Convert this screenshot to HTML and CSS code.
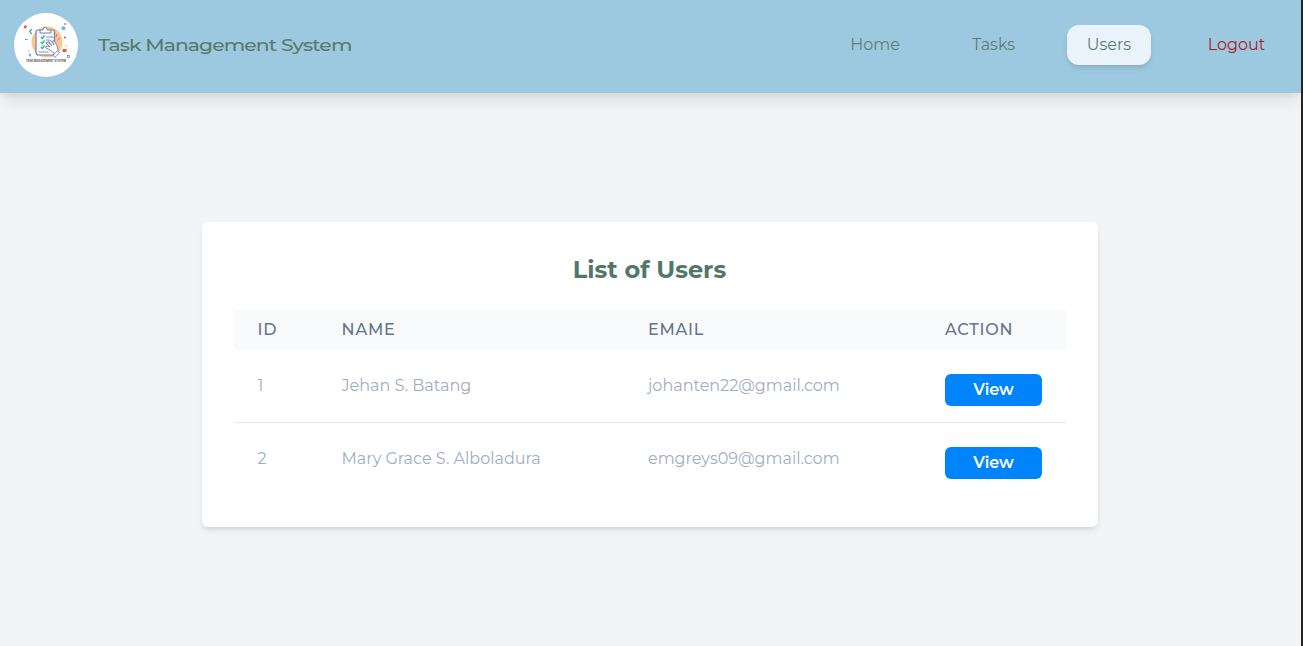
FILE: index.html
```html
<!DOCTYPE html>
<html lang="en">
<head>
<meta charset="utf-8">
<title>Task Management System</title>
<link rel="stylesheet" href="styles.css">
</head>
<body>
<div class="page">
  <header class="navbar">
    <div class="brand">
      <svg class="logo" viewBox="0 0 64 64" aria-hidden="true">
        <circle cx="32" cy="32" r="32" fill="#fff"/>
        <circle cx="33" cy="29" r="15.500" fill="#ffc58e"/>
        <path d="M26 17H23.500Q22 17 22 18.500V39.500Q22 42 24.500 42H38.500Q40.500 42 40.500 39.500V18.500Q40.500 17 39 17H36" fill="#f4f8ff" stroke="#7680ae" stroke-width="1.200"/>
        <path d="M26 20V17H29Q29.500 14 31 14T33.500 17H37V20Z" fill="#fff" stroke="#7680ae"/>
        <path d="M27 24l1.300 1.500 2.200-3M27 29l1.300 1.500 2.200-3M27 34l1.300 1.500 2.200-3" fill="none" stroke="#35b878" stroke-width="1.300"/>
        <path d="M32 24h6M32 27h3M24.500 39h10" stroke="#7680ae" stroke-width=".8"/>
        <path d="M40 40L36 37 31.500 34.500Q31 33 34 33L36 34 32 30Q32 28.500 34 29.500L38 33 34.500 28Q35 26.500 37 28L40 32 38.500 28Q40 26.500 41 29L43.500 34Q45 38 42.500 40" fill="#fff" stroke="#7680ae" stroke-width=".9"/>
        <path d="M39 42l4.500-4 2 1.500-4.500 5zM39.500 25l-2-2M42 24l1-3M43.500 27l2.500-2" fill="#fff" stroke="#7680ae" stroke-width=".9"/>
        <path d="M18 16l-2.500 2.500L18 21" fill="none" stroke="#3dbd83" stroke-width="1.300"/>
        <circle cx="11.300" cy="13.800" r="1.600" fill="#f05a32"/>
        <circle cx="49.500" cy="15.300" r="2" fill="#5ebce5"/>
        <circle cx="51" cy="11" r="1" fill="#e96d55"/>
        <rect x="48.500" y="36" width="4" height="3" fill="#f05a32"/>
        <path d="M17 40v4l-3-2z" fill="#58b9e6"/>
        <path d="M11 26.500h3" stroke="#7880ae" stroke-width=".8"/>
        <circle cx="51" cy="24.500" r="1" fill="#6470a5"/>
        <circle cx="14.500" cy="38" r=".7" fill="#ef9067"/>
        <circle cx="52" cy="33" r=".7" fill="#efaa67"/>
        <rect x="53.500" y="42.500" width="2" height="2" fill="none" stroke="#6470a5" stroke-width=".7"/>
        <circle cx="15.500" cy="59" r=".6" fill="#6bbd9a"/>
        <text x="12" y="49" textLength="40" lengthAdjust="spacingAndGlyphs" class="logo-text">TASK MANAGEMENT SYSTEM</text>
      </svg>
      <span class="brand-name">Task Management System</span>
    </div>
    <nav class="links">
      <a class="link home">Home</a>
      <a class="link tasks">Tasks</a>
      <a class="link users">Users</a>
      <a class="link logout">Logout</a>
    </nav>
  </header>
  <main class="content">
    <section class="card">
      <h1 class="title">List of Users</h1>
      <div class="row head"><span>ID</span><span>NAME</span><span>EMAIL</span><span>ACTION</span></div>
      <div class="row item"><span>1</span><span>Jehan S. Batang</span><span>johanten22@gmail.com</span><a class="view">View</a></div>
      <div class="row item"><span>2</span><span>Mary Grace S. Alboladura</span><span>emgreys09@gmail.com</span><a class="view">View</a></div>
    </section>
  </main>
</div>
</body>
</html>
```
FILE: styles.css
```css
* { box-sizing: border-box; }
body { margin: 0; background: #242424; font: 16px/24px Montserrat, Inter, sans-serif; }
.page { width: calc(100% - 2px); height: 646px; overflow: hidden; background: #f3f4f6; display: flex; flex-direction: column; }
.navbar { height: 93px; flex: none; padding: 0 16px 3px 14px; display: flex; align-items: center; justify-content: space-between; background: #9dc9e0; box-shadow: 0 10px 15px -3px rgba(0,0,0,.1), 0 4px 6px -2px rgba(0,0,0,.05); }
.brand { display: flex; align-items: center; gap: 20px; }
.logo { width: 64px; height: 64px; flex: none; }
.logo-text { font: 600 3.4px Inter, sans-serif; fill: #444; }
.brand-name { font-size: 17px; font-weight: 550; letter-spacing: -.75px; color: #567b6c; white-space: nowrap; transform: scaleX(1.195); transform-origin: left; }
.links { display: flex; gap: 32px; }
.link { height: 40px; line-height: 40px; text-align: center; border-radius: 12px; font-weight: 400; color: #5b7f77; }
.home { width: 90px; }
.tasks { width: 83px; }
.users { width: 84px; background: #eaf3f9; box-shadow: 0 4px 6px -1px rgba(0,0,0,.1), 0 2px 4px -1px rgba(0,0,0,.06); }
.logout { width: 97px; margin-left: 5px; color: #b01823; }
.content { flex: 1; padding: 129px 203px 0 202px; }
.card { height: 305px; padding: 32px; background: #fff; border-radius: 6px; box-shadow: 0 4px 6px -1px rgba(0,0,0,.1), 0 2px 4px -1px rgba(0,0,0,.06); }
.title { margin: 0 1px 24px 0; text-align: center; font-size: 24px; line-height: 32px; font-weight: 700; color: #52766a; }
.row { display: grid; grid-template-columns: 84px 306.4px 297px 97px; padding: 0 24px 0 23.6px; white-space: nowrap; justify-items: start; }
.head { height: 40px; padding-top: 8px; background: #f8fafc; color: #64748b; font-weight: 500; letter-spacing: .8px; }
.item { height: 73px; padding-top: 24px; color: #a0aec0; border-bottom: 1px solid #e2e8f0; }
.item:last-child { border-bottom: 0; }
.view { width: 97px; height: 32px; border-radius: 6px; background: #0084fb; color: #fff; text-align: center; line-height: 32px; font-weight: 600; }
```
